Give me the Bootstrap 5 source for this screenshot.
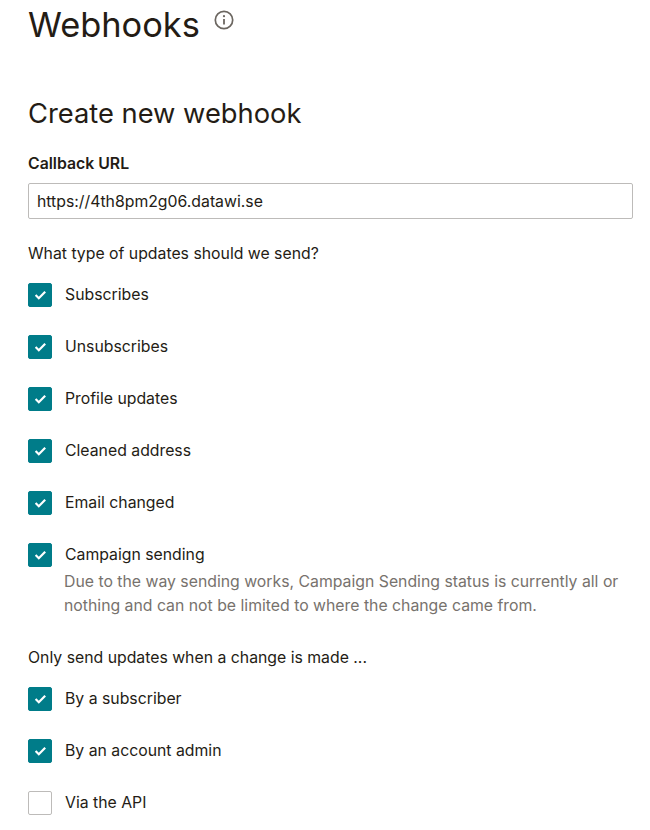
<!DOCTYPE html>
<html>
  <head>
    <title>Webhooks</title>
    <link href="https://cdn.jsdelivr.net/npm/bootstrap@5.3.0/dist/css/bootstrap.min.css" rel="stylesheet" />
    <style>
      body {
        font-family: "Inter", "Liberation Sans", sans-serif;
        color: #241c15;
        font-size: 15.8px;
        overflow: hidden;
      }

      #page {
        padding: 0 17px 0 28px;
      }

      .title-row {
        gap: 14px;
      }

      .page-title {
        font-size: 34.4px;
        font-weight: 400;
        line-height: 50px;
        margin: 0;
      }

      .info-icon {
        width: 20px;
        height: 20px;
        margin-top: 10px;
        color: #6b6660;
      }

      .section-title {
        font-size: 27.3px;
        font-weight: 400;
        line-height: 36px;
        margin: 46px 0 0;
      }

      .url-label {
        font-weight: 600;
        line-height: 22px;
        margin: 21px 0 8px;
        display: block;
      }

      .url-input {
        height: 36px;
        border: 1px solid #bdbbb9;
        border-radius: 2px;
        padding: 0 8px;
        font-size: 15.8px;
        color: #241c15;
      }

      .group-label {
        line-height: 22px;
        margin: 0;
      }

      .types-list,
      .changes-list {
        margin-top: 18px;
      }

      .check-row {
        display: flex;
        gap: 13px;
        min-height: 24px;
        margin: 0;
        padding: 0;
      }

      .check-row .form-check-input {
        width: 24px;
        height: 24px;
        margin: 0;
        flex-shrink: 0;
        float: none;
        border: 1px solid #bdbbb9;
        border-radius: 2px;
      }

      .check-row .form-check-input:checked {
        background-color: #007c89;
        border-color: #007c89;
        background-size: 24px;
        background-image: url("data:image/svg+xml,%3csvg xmlns='http://www.w3.org/2000/svg' viewBox='0 0 24 24'%3e%3cpath fill='none' stroke='%23fff' stroke-width='2.2' d='M7.6 12l3.2 3.2 6.4-6.4'/%3e%3c/svg%3e");
      }

      .check-row > .form-check-label {
        line-height: 22px;
        padding-top: 1px;
      }

      .check-help {
        color: #77726d;
        line-height: 24px;
        margin: 3px 0 0 -1px;
      }

      .changes-label {
        margin-top: 29px;
      }
    </style>
  </head>
  <body>
    <div id="page">
      <div class="d-flex title-row">
        <h1 class="page-title">Webhooks</h1>
        <svg class="info-icon" viewBox="0 0 20 20" fill="none" stroke="currentColor">
          <circle cx="10" cy="10" r="8.7" stroke-width="1.7" />
          <circle cx="10" cy="6.2" r="1.1" fill="currentColor" stroke="none" />
          <path d="M10 9v5.5" stroke-width="1.8" />
        </svg>
      </div>
      <h2 class="section-title">Create new webhook</h2>
      <form>
        <label class="url-label" for="callback">Callback URL</label>
        <input id="callback" class="form-control url-input" type="text" value="https://4th8pm2g06.datawi.se" />

        <p class="group-label mt-4">What type of updates should we send?</p>
        <div class="d-flex flex-column types-list">
          <div class="form-check check-row mb-4 pb-1">
            <input class="form-check-input" type="checkbox" id="c1" checked />
            <label class="form-check-label" for="c1">Subscribes</label>
          </div>
          <div class="form-check check-row mb-4 pb-1">
            <input class="form-check-input" type="checkbox" id="c2" checked />
            <label class="form-check-label" for="c2">Unsubscribes</label>
          </div>
          <div class="form-check check-row mb-4 pb-1">
            <input class="form-check-input" type="checkbox" id="c3" checked />
            <label class="form-check-label" for="c3">Profile updates</label>
          </div>
          <div class="form-check check-row mb-4 pb-1">
            <input class="form-check-input" type="checkbox" id="c4" checked />
            <label class="form-check-label" for="c4">Cleaned address</label>
          </div>
          <div class="form-check check-row mb-4 pb-1">
            <input class="form-check-input" type="checkbox" id="c5" checked />
            <label class="form-check-label" for="c5">Email changed</label>
          </div>
          <div class="form-check check-row">
            <input class="form-check-input" type="checkbox" id="c6" checked />
            <div>
              <label class="form-check-label" for="c6">Campaign sending</label>
              <div class="check-help">Due to the way sending works, Campaign Sending status is currently all or nothing and can not be limited to where the change came from.</div>
            </div>
          </div>
        </div>

        <p class="group-label changes-label">Only send updates when a change is made ...</p>
        <div class="d-flex flex-column changes-list">
          <div class="form-check check-row mb-4 pb-1">
            <input class="form-check-input" type="checkbox" id="c7" checked />
            <label class="form-check-label" for="c7">By a subscriber</label>
          </div>
          <div class="form-check check-row mb-4 pb-1">
            <input class="form-check-input" type="checkbox" id="c8" checked />
            <label class="form-check-label" for="c8">By an account admin</label>
          </div>
          <div class="form-check check-row">
            <input class="form-check-input" type="checkbox" id="c9" />
            <label class="form-check-label" for="c9">Via the API</label>
          </div>
        </div>
      </form>
    </div>
    <script src="https://cdn.jsdelivr.net/npm/bootstrap@5.3.0/dist/js/bootstrap.bundle.min.js"></script>
  </body>
</html>
